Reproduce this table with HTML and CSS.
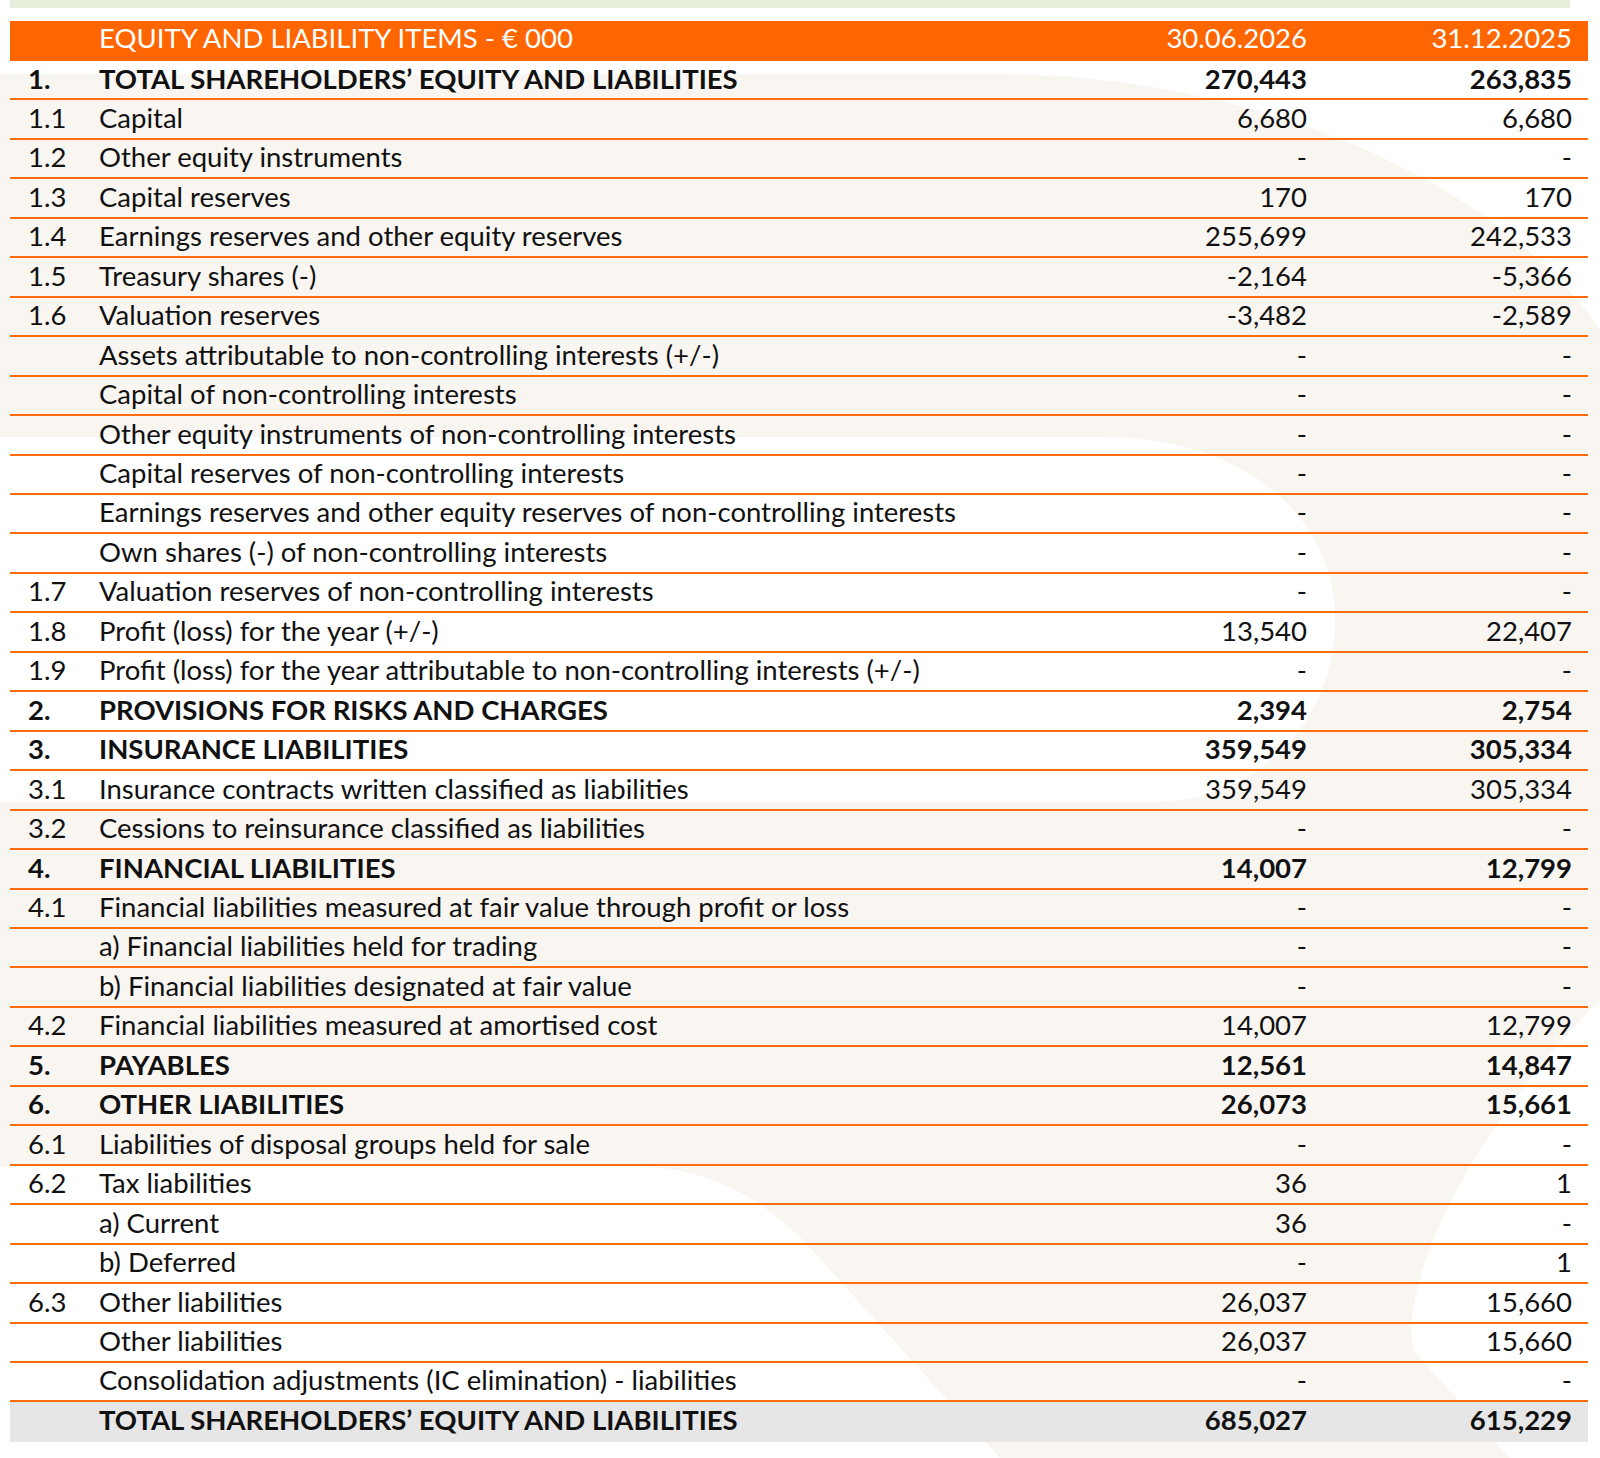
FILE: index.html
```html
<!DOCTYPE html>
<html lang="en">
<head>
<meta charset="utf-8">
<title>Equity and liability items</title>
<link rel="stylesheet" href="styles.css">
</head>
<body>
<div class="page">
  <svg class="bg" width="1600" height="1458" viewBox="0 0 1600 1458" aria-hidden="true">
    <path class="bg-tint" d="M0,74 H1000 C1250,74 1500,180 1600,330 V1458 H0 Z"/>
    <path class="bg-clear" d="M0,437 H1100 C1250,437 1335,520 1335,620 C1335,720 1260,802 1150,802 H0 Z"/>
    <path class="bg-clear" d="M0,1167 H640 C720,1167 780,1210 830,1270 L1000,1458 H0 Z"/>
    <path class="bg-clear" d="M1600,1000 C1470,1130 1400,1280 1413,1350 L1510,1458 H1600 Z"/>
  </svg>
  <div class="topbar"></div>
  <div class="table">
    <div class="row head"><span class="num"></span><span class="label">EQUITY AND LIABILITY ITEMS - € 000</span><span class="val">30.06.2026</span><span class="val">31.12.2025</span></div>
    <div class="row bold"><span class="num">1.</span><span class="label">TOTAL SHAREHOLDERS’ EQUITY AND LIABILITIES</span><span class="val">270,443</span><span class="val">263,835</span></div>
    <div class="row"><span class="num">1.1</span><span class="label">Capital</span><span class="val">6,680</span><span class="val">6,680</span></div>
    <div class="row"><span class="num">1.2</span><span class="label">Other equity instruments</span><span class="val">-</span><span class="val">-</span></div>
    <div class="row"><span class="num">1.3</span><span class="label">Capital reserves</span><span class="val">170</span><span class="val">170</span></div>
    <div class="row"><span class="num">1.4</span><span class="label">Earnings reserves and other equity reserves</span><span class="val">255,699</span><span class="val">242,533</span></div>
    <div class="row"><span class="num">1.5</span><span class="label">Treasury shares (-)</span><span class="val">-2,164</span><span class="val">-5,366</span></div>
    <div class="row"><span class="num">1.6</span><span class="label">Valuation reserves</span><span class="val">-3,482</span><span class="val">-2,589</span></div>
    <div class="row"><span class="num"></span><span class="label">Assets attributable to non-controlling interests (+/-)</span><span class="val">-</span><span class="val">-</span></div>
    <div class="row"><span class="num"></span><span class="label">Capital of non-controlling interests</span><span class="val">-</span><span class="val">-</span></div>
    <div class="row"><span class="num"></span><span class="label">Other equity instruments of non-controlling interests</span><span class="val">-</span><span class="val">-</span></div>
    <div class="row"><span class="num"></span><span class="label">Capital reserves of non-controlling interests</span><span class="val">-</span><span class="val">-</span></div>
    <div class="row"><span class="num"></span><span class="label">Earnings reserves and other equity reserves of non-controlling interests</span><span class="val">-</span><span class="val">-</span></div>
    <div class="row"><span class="num"></span><span class="label">Own shares (-) of non-controlling interests</span><span class="val">-</span><span class="val">-</span></div>
    <div class="row"><span class="num">1.7</span><span class="label">Valuation reserves of non-controlling interests</span><span class="val">-</span><span class="val">-</span></div>
    <div class="row"><span class="num">1.8</span><span class="label">Profit (loss) for the year (+/-)</span><span class="val">13,540</span><span class="val">22,407</span></div>
    <div class="row"><span class="num">1.9</span><span class="label">Profit (loss) for the year attributable to non-controlling interests (+/-)</span><span class="val">-</span><span class="val">-</span></div>
    <div class="row bold"><span class="num">2.</span><span class="label">PROVISIONS FOR RISKS AND CHARGES</span><span class="val">2,394</span><span class="val">2,754</span></div>
    <div class="row bold"><span class="num">3.</span><span class="label">INSURANCE LIABILITIES</span><span class="val">359,549</span><span class="val">305,334</span></div>
    <div class="row"><span class="num">3.1</span><span class="label">Insurance contracts written classified as liabilities</span><span class="val">359,549</span><span class="val">305,334</span></div>
    <div class="row"><span class="num">3.2</span><span class="label">Cessions to reinsurance classified as liabilities</span><span class="val">-</span><span class="val">-</span></div>
    <div class="row bold"><span class="num">4.</span><span class="label">FINANCIAL LIABILITIES</span><span class="val">14,007</span><span class="val">12,799</span></div>
    <div class="row"><span class="num">4.1</span><span class="label">Financial liabilities measured at fair value through profit or loss</span><span class="val">-</span><span class="val">-</span></div>
    <div class="row"><span class="num"></span><span class="label">a) Financial liabilities held for trading</span><span class="val">-</span><span class="val">-</span></div>
    <div class="row"><span class="num"></span><span class="label">b) Financial liabilities designated at fair value</span><span class="val">-</span><span class="val">-</span></div>
    <div class="row"><span class="num">4.2</span><span class="label">Financial liabilities measured at amortised cost</span><span class="val">14,007</span><span class="val">12,799</span></div>
    <div class="row bold"><span class="num">5.</span><span class="label">PAYABLES</span><span class="val">12,561</span><span class="val">14,847</span></div>
    <div class="row bold"><span class="num">6.</span><span class="label">OTHER LIABILITIES</span><span class="val">26,073</span><span class="val">15,661</span></div>
    <div class="row"><span class="num">6.1</span><span class="label">Liabilities of disposal groups held for sale</span><span class="val">-</span><span class="val">-</span></div>
    <div class="row"><span class="num">6.2</span><span class="label">Tax liabilities</span><span class="val">36</span><span class="val">1</span></div>
    <div class="row"><span class="num"></span><span class="label">a) Current</span><span class="val">36</span><span class="val">-</span></div>
    <div class="row"><span class="num"></span><span class="label">b) Deferred</span><span class="val">-</span><span class="val">1</span></div>
    <div class="row"><span class="num">6.3</span><span class="label">Other liabilities</span><span class="val">26,037</span><span class="val">15,660</span></div>
    <div class="row"><span class="num"></span><span class="label">Other liabilities</span><span class="val">26,037</span><span class="val">15,660</span></div>
    <div class="row"><span class="num"></span><span class="label">Consolidation adjustments (IC elimination) - liabilities</span><span class="val">-</span><span class="val">-</span></div>
    <div class="row total"><span class="num"></span><span class="label">TOTAL SHAREHOLDERS’ EQUITY AND LIABILITIES</span><span class="val">685,027</span><span class="val">615,229</span></div>
  </div>
</div>
</body>
</html>
```
FILE: styles.css
```css
html, body {
  margin: 0;
  padding: 0;
  background: #ffffff;
}

.page {
  position: relative;
  width: 1600px;
  height: 1458px;
  overflow: hidden;
  font-family: Lato, "Open Sans", "Liberation Sans", sans-serif;
  color: #111111;
}

.bg {
  position: absolute;
  left: 0;
  top: 0;
}

.bg-tint {
  fill: #f9f6f2;
}

.bg-clear {
  fill: #ffffff;
}

.topbar {
  position: relative;
  margin-left: 10px;
  width: 1560px;
  height: 8px;
  background: #e8eedc;
}

.table {
  position: relative;
  margin: 13px 12px 0 10px;
}

.row {
  display: grid;
  grid-template-columns: 89px 1fr 225px 265px;
  height: 39.46px;
  box-sizing: border-box;
  padding-top: 2.5px;
  border-bottom: 2px solid #ff6d0a;
  font-size: 27.5px;
  line-height: 30px;
  white-space: nowrap;
}

.num {
  padding-left: 18px;
}

.val {
  text-align: right;
  padding-right: 16px;
}

.head {
  height: 40px;
  padding-top: 2px;
  border-bottom: none;
  background: #ff6600;
  color: #ffffff;
}

.bold {
  font-weight: 700;
}

.total {
  border-bottom: none;
  background: #e6e6e6;
  font-weight: 700;
}
```
